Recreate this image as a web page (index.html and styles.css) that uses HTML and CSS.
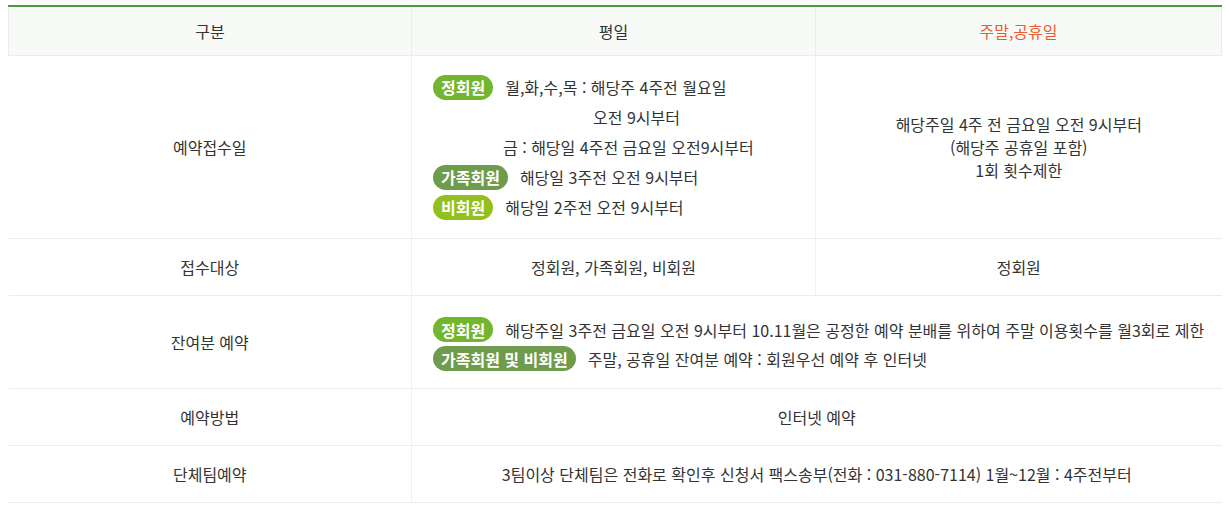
FILE: index.html
```html
<!DOCTYPE html>
<html lang="ko">
<head>
<meta charset="utf-8">
<link rel="stylesheet" href="styles.css">
</head>
<body>
<table class="rsv">
  <colgroup><col class="c1"><col class="c2"><col class="c3"></colgroup>
  <thead>
    <tr class="head">
      <th>구분</th>
      <th>평일</th>
      <th class="red">주말,공휴일</th>
    </tr>
  </thead>
  <tbody>
    <tr class="r1">
      <td>예약접수일</td>
      <td class="left">
        <div class="line"><span class="badge g1">정회원</span><span>월,화,수,목 : 해당주 4주전 월요일</span></div>
        <div class="line l2">오전 9시부터</div>
        <div class="line l3">금 : 해당일 4주전 금요일 오전9시부터</div>
        <div class="line"><span class="badge g2">가족회원</span><span>해당일 3주전 오전 9시부터</span></div>
        <div class="line"><span class="badge g3">비회원</span><span>해당일 2주전 오전 9시부터</span></div>
      </td>
      <td class="multi">해당주일 4주 전 금요일 오전 9시부터<br>(해당주 공휴일 포함)<br>1회 횟수제한</td>
    </tr>
    <tr class="rs">
      <td>접수대상</td>
      <td>정회원, 가족회원, 비회원</td>
      <td>정회원</td>
    </tr>
    <tr class="r3">
      <td>잔여분 예약</td>
      <td colspan="2" class="left">
        <div class="line"><span class="badge g1">정회원</span><span>해당주일 3주전 금요일 오전 9시부터 10.11월은 공정한 예약 분배를 위하여 주말 이용횟수를 월3회로 제한</span></div>
        <div class="line"><span class="badge g2">가족회원 및 비회원</span><span>주말, 공휴일 잔여분 예약 : 회원우선 예약 후 인터넷</span></div>
      </td>
    </tr>
    <tr class="rs">
      <td>예약방법</td>
      <td colspan="2">인터넷 예약</td>
    </tr>
    <tr class="rs">
      <td>단체팀예약</td>
      <td colspan="2">3팀이상 단체팀은 전화로 확인후 신청서 팩스송부(전화 : 031-880-7114) 1월~12월 : 4주전부터</td>
    </tr>
  </tbody>
</table>
</body>
</html>
```

FILE: styles.css
```css
html, body {
  margin: 0;
  padding: 0;
  background: #fff;
}
body {
  padding: 5px 8px 0 8px;
  font-family: "Noto Sans CJK KR", "Noto Sans", sans-serif;
  font-size: 16px;
  color: #333;
}
.rsv {
  width: 1213px;
  border-collapse: collapse;
  table-layout: fixed;
  border-top: 2px solid #4c9a3b;
}
.c1 { width: 403px; }
.c2 { width: 404px; }
.c3 { width: 406px; }
.rsv th, .rsv td {
  text-align: center;
  vertical-align: middle;
  padding: 0;
  font-weight: 400;
  line-height: 20px;
}
.head th {
  height: 48px;
  background: #f8faf8;
  border: 1px solid #ececec;
  border-top: none;
}
.red { color: #ee5a2f; }
.rsv tbody td {
  border-bottom: 1px solid #ececec;
  border-left: 1px solid #f1f1f1;
}
.rsv tbody td:first-child { border-left: none; }
.r1 td { height: 182px; }
.rs td { height: 56px; }
.r3 td { height: 88px; }
.left { text-align: left !important; }
.r1 .left { padding: 0 0 0 21px !important; }
.r3 .left { padding: 4px 0 0 21px !important; }
.line {
  display: flex;
  align-items: center;
  height: 30px;
  gap: 12px;
}
.r3 .line { height: 29px; }
.l2 { padding-left: 160px; }
.l3 { padding-left: 70px; }
.multi { line-height: 23px !important; }
.badge {
  display: inline-flex;
  align-items: center;
  height: 25px;
  padding: 0 8px;
  border-radius: 13px;
  color: #fff;
  font-weight: 700;
  font-size: 16px;
  white-space: nowrap;
}
.g1 { background: #72b52f; }
.g2 { background: #6f9b4c; }
.g3 { background: #93c01c; }
```
